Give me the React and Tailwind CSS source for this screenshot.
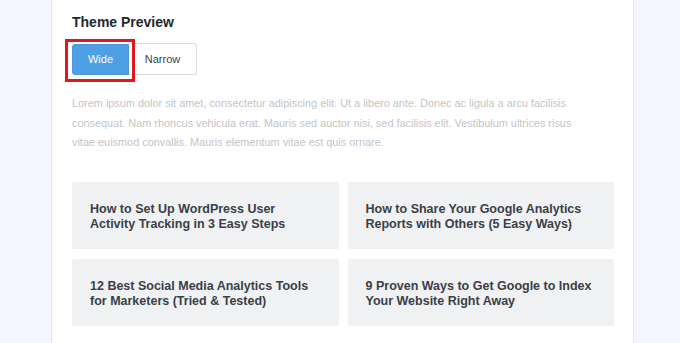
import React from 'react';

const posts = [
  'How to Set Up WordPress User Activity Tracking in 3 Easy Steps',
  'How to Share Your Google Analytics Reports with Others (5 Easy Ways)',
  '12 Best Social Media Analytics Tools for Marketers (Tried & Tested)',
  '9 Proven Ways to Get Google to Index Your Website Right Away',
];

const App = () => {
  return (
    <div className="w-[680px] h-[343px] overflow-hidden bg-[#f3f6fe] flex font-['Liberation_Sans']">
      <div className="ml-[51px] w-[583px] h-full bg-white border-x border-[#e3e8f3] pl-[20px] pr-[19px] pt-[12px]">
        {/* Header */}
        <h2 className="text-[14px] leading-[20px] font-bold text-[#23282d]">Theme Preview</h2>

        {/* Width toggle */}
        <div className="mt-[11px] flex items-center">
          <div className="relative flex">
            <button className="w-[57px] h-[31px] bg-[#4f9fe4] border border-[#4a95d8] rounded-l-[3px] text-white text-[11px]">
              Wide
            </button>
            <span className="absolute -left-[7px] -top-[5px] w-[70px] h-[43px] border-[3px] border-[#e3151f] pointer-events-none" />
          </div>
          <button className="w-[68px] h-[32px] bg-white border border-[#d4dbe5] border-l-0 rounded-r-[3px] text-[#3c434a] text-[11px]">
            Narrow
          </button>
        </div>

        {/* Description */}
        <p className="mt-[19px] text-[10.9px] leading-[19.5px] text-[#c3c4c7] pr-[30px]">
          Lorem ipsum dolor sit amet, consectetur adipiscing elit. Ut a libero ante. Donec ac ligula a arcu facilisis
          consequat. Nam rhoncus vehicula erat. Mauris sed auctor nisi, sed facilisis elit. Vestibulum ultrices risus
          vitae euismod convallis. Mauris elementum vitae est quis ornare.
        </p>

        {/* Related posts */}
        <div className="mt-[29px] grid grid-cols-2 gap-x-[9px] gap-y-[10px]">
          {posts.map((title) => (
            <div key={title} className="h-[67px] bg-[#f0f1f3] rounded-[2px] px-[18px] pt-[3px] flex items-center">
              <p className="text-[12.5px] leading-[15px] font-bold text-[#3a3f48]">{title}</p>
            </div>
          ))}
        </div>
      </div>
    </div>
  );
};

export default App;
